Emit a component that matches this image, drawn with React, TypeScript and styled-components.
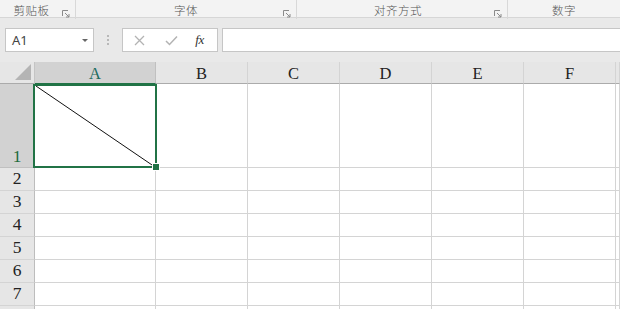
import React from "react";
import styled, { createGlobalStyle } from "styled-components";

const Global = createGlobalStyle`
  html, body { margin: 0; padding: 0; }
  body { width: 620px; height: 309px; overflow: hidden; background: #ffffff; font-family: "Noto Sans CJK SC", "Noto Sans", sans-serif; }
`;

const Page = styled.div`
  width: 620px;
  height: 309px;
  overflow: hidden;
  display: flex;
  flex-direction: column;
`;

const RibbonLabels = styled.div`
  height: 17px;
  background: #f3f3f3;
  border-bottom: 1px solid #d6d6d6;
  display: grid;
  grid-template-columns: 76px 221px 211px 1fr;
  flex: none;
`;

const Group = styled.div<{ $last?: boolean }>`
  position: relative;
  display: flex;
  align-items: center;
  justify-content: center;
  font-size: 11.5px;
  font-weight: 300;
  color: #555;
  line-height: 17px;
  border-right: ${(p) => (p.$last ? "none" : "1px solid #d8d8d8")};
  margin-bottom: 2px;
  padding-top: 2px;
`;

const GroupText = styled.span<{ $shift: number }>`
  position: relative;
  left: ${(p) => p.$shift}px;
  letter-spacing: 0.5px;
`;

const Launcher = styled.svg`
  position: absolute;
  right: 5px;
  bottom: 1px;
`;

const FormulaArea = styled.div`
  background: #e9e9e9;
  height: 44px;
  padding-top: 10px;
  box-sizing: border-box;
  flex: none;
  display: flex;
  align-items: flex-start;
`;

const NameBox = styled.div`
  margin-left: 5px;
  width: 89px;
  height: 24px;
  box-sizing: border-box;
  background: #fff;
  border: 1px solid #c6c6c6;
  display: flex;
  align-items: center;
  justify-content: space-between;
  padding: 0 5px 0 6px;
  font-family: "Noto Sans", "Open Sans", sans-serif;
  font-size: 13px;
  color: #444;
`;

const Caret = styled.span`
  width: 0;
  height: 0;
  border-left: 3.5px solid transparent;
  border-right: 3.5px solid transparent;
  border-top: 3.5px solid #666;
  margin-top: 1px;
`;

const Dots = styled.div`
  width: 28px;
  height: 24px;
  display: flex;
  flex-direction: column;
  align-items: center;
  justify-content: center;
  gap: 2px;
  & > span {
    width: 2px;
    height: 2px;
    background: #b8b8b8;
  }
`;

const FxBox = styled.div`
  width: 96px;
  height: 24px;
  box-sizing: border-box;
  background: #fff;
  border: 1px solid #c6c6c6;
  display: grid;
  grid-template-columns: 31px 33px 1fr;
  align-items: center;
  justify-items: center;
  padding-left: 1px;
`;

const Fx = styled.span`
  font-family: "Liberation Serif", serif;
  font-style: italic;
  font-size: 13px;
  color: #333;
  letter-spacing: -0.5px;
  margin-right: 6px;
`;

const FormulaInput = styled.div`
  margin-left: 4px;
  flex: 1;
  margin-right: -2px;
  height: 24px;
  box-sizing: border-box;
  background: #fff;
  border: 1px solid #c6c6c6;
`;

const Sheet = styled.div`
  display: grid;
  grid-template-columns: 35px 121px 92px 92px 92px 92px 92px 1fr;
  grid-template-rows: 22px 84px repeat(7, 23px);
  flex: none;
`;

const Corner = styled.div`
  background: #e6e6e6;
  border-right: 1px solid #c4c4c4;
  border-bottom: 1px solid #ababab;
  position: relative;
  box-sizing: border-box;
`;

const CornerTri = styled.div`
  position: absolute;
  right: 3px;
  bottom: 3px;
  width: 0;
  height: 0;
  border-left: 16px solid transparent;
  border-bottom: 16px solid #b4b4b4;
`;

const ColHead = styled.div<{ $sel?: boolean }>`
  background: ${(p) => (p.$sel ? "#d2d2d2" : "#e6e6e6")};
  border-right: 1px solid ${(p) => (p.$sel ? "#c0c0c0" : "#d4d4d4")};
  border-bottom: 1px solid ${(p) => (p.$sel ? "#217346" : "#ababab")};
  box-sizing: border-box;
  display: flex;
  align-items: center;
  justify-content: center;
  font-family: "Liberation Serif", serif;
  font-size: 16.5px;
  padding-top: 2px;
  color: ${(p) => (p.$sel ? "#1e6b5e" : "#222")};
`;

const RowHead = styled.div<{ $sel?: boolean }>`
  background: ${(p) => (p.$sel ? "#d2d2d2" : "#e6e6e6")};
  border-right: 1px solid ${(p) => (p.$sel ? "#217346" : "#bdbdbd")};
  border-bottom: 1px solid ${(p) => (p.$sel ? "#c0c0c0" : "#d4d4d4")};
  box-sizing: border-box;
  display: flex;
  align-items: flex-end;
  justify-content: center;
  padding-bottom: ${(p) => (p.$sel ? "0px" : "1px")};
  font-family: "Liberation Serif", serif;
  font-size: 17.5px;
  line-height: 21px;
  color: ${(p) => (p.$sel ? "#1e6b3e" : "#222")};
`;

const Cell = styled.div`
  border-right: 1px solid #d4d4d4;
  border-bottom: 1px solid #d4d4d4;
  box-sizing: border-box;
  background: #fff;
  position: relative;
`;

const Selection = styled.div`
  position: absolute;
  z-index: 2;
  left: -2px;
  top: 0px;
  right: -2px;
  bottom: -1px;
  border: 2px solid #217346;
  pointer-events: none;
`;

const Diagonal = styled.svg`
  position: absolute;
  left: 0;
  top: 0;
  width: 100%;
  height: 100%;
`;

const Handle = styled.div`
  position: absolute;
  right: -5px;
  bottom: -5px;
  width: 6px;
  height: 6px;
  background: #217346;
  border: 1px solid #fff;
`;

const cols = ["A", "B", "C", "D", "E", "F", ""];
const groups = [
  { name: "剪贴板", shift: -6, launcher: true },
  { name: "字体", shift: 0, launcher: true },
  { name: "对齐方式", shift: -4, launcher: true },
  { name: "数字", shift: 0, launcher: false },
];

const LauncherIcon = () => (
  <Launcher width="8" height="8" viewBox="0 0 8 8">
    <path d="M0.5 6V0.5H6" fill="none" stroke="#8a8a8a" strokeWidth="1" />
    <path d="M3 3L7 7M7 4V7H4" fill="none" stroke="#8a8a8a" strokeWidth="1" />
  </Launcher>
);

export default function App() {
  return (
    <Page>
      <Global />
      <RibbonLabels>
        {groups.map((g, i) => (
          <Group key={g.name} $last={i === groups.length - 1}>
            <GroupText $shift={g.shift}>{g.name}</GroupText>
            {g.launcher && <LauncherIcon />}
          </Group>
        ))}
      </RibbonLabels>
      <FormulaArea>
        <NameBox>
          <span>A1</span>
          <Caret />
        </NameBox>
        <Dots>
          <span />
          <span />
          <span />
        </Dots>
        <FxBox>
          <svg width="11" height="11" viewBox="0 0 11 11">
            <path d="M1 1L10 10M10 1L1 10" stroke="#b3b3b3" strokeWidth="1.3" fill="none" />
          </svg>
          <svg width="13" height="11" viewBox="0 0 13 11">
            <path d="M1 6L4.5 9.5L12 1.5" stroke="#b3b3b3" strokeWidth="1.5" fill="none" />
          </svg>
          <Fx>fx</Fx>
        </FxBox>
        <FormulaInput />
      </FormulaArea>
      <Sheet>
        <Corner>
          <CornerTri />
        </Corner>
        {cols.map((c, i) => (
          <ColHead key={"h" + i} $sel={c === "A"}>
            {c}
          </ColHead>
        ))}
        {[1, 2, 3, 4, 5, 6, 7, 8].map((r) => (
          <React.Fragment key={r}>
            <RowHead $sel={r === 1}>{r === 8 ? "" : r}</RowHead>
            {cols.map((c, i) => (
              <Cell key={r + "-" + i}>
                {r === 1 && c === "A" && (
                  <>
                    <Diagonal viewBox="0 0 120 82" preserveAspectRatio="none">
                      <line x1="1" y1="2" x2="120" y2="82" stroke="#111" strokeWidth="1" vectorEffect="non-scaling-stroke" />
                    </Diagonal>
                    <Selection>
                      <Handle />
                    </Selection>
                  </>
                )}
              </Cell>
            ))}
          </React.Fragment>
        ))}
      </Sheet>
    </Page>
  );
}
